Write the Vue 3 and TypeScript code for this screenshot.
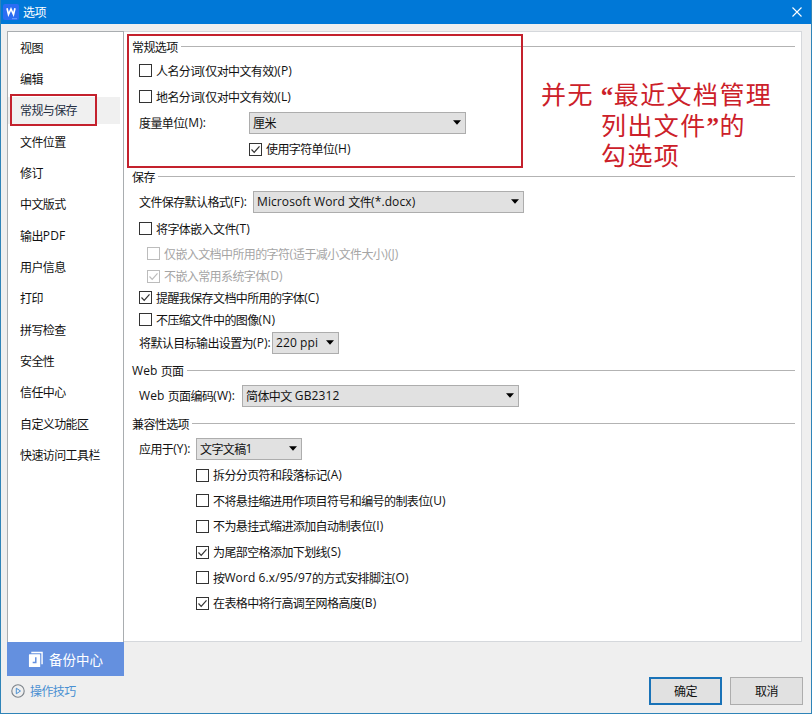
<script setup lang="ts">
import { h, ref, type FunctionalComponent } from 'vue'

interface Option {
  label: string
  checked: boolean
  disabled?: boolean
}

const tabs: string[] = [
  '视图', '编辑', '常规与保存', '文件位置', '修订', '中文版式', '输出PDF',
  '用户信息', '打印', '拼写检查', '安全性', '信任中心', '自定义功能区', '快速访问工具栏',
]
const activeTab = ref('常规与保存')

const generalOptions = ref<Option[]>([
  { label: '人名分词(仅对中文有效)(P)', checked: false },
  { label: '地名分词(仅对中文有效)(L)', checked: false },
])
const charUnit = ref<Option>({ label: '使用字符单位(H)', checked: true })
const saveOptions = ref<Option[]>([
  { label: '将字体嵌入文件(T)', checked: false },
  { label: '仅嵌入文档中所用的字符(适于减小文件大小)(J)', checked: false, disabled: true },
  { label: '不嵌入常用系统字体(D)', checked: true, disabled: true },
  { label: '提醒我保存文档中所用的字体(C)', checked: true },
  { label: '不压缩文件中的图像(N)', checked: false },
])
const compatOptions = ref<Option[]>([
  { label: '拆分分页符和段落标记(A)', checked: false },
  { label: '不将悬挂缩进用作项目符号和编号的制表位(U)', checked: false },
  { label: '不为悬挂式缩进添加自动制表位(I)', checked: false },
  { label: '为尾部空格添加下划线(S)', checked: true },
  { label: '按Word 6.x/95/97的方式安排脚注(O)', checked: false },
  { label: '在表格中将行高调至网格高度(B)', checked: true },
])

// Splits a label into Chinese and Latin runs so each gets its own spacing.
const Txt: FunctionalComponent<{ t: string }> = (props) =>
  h('span', { class: 'txt' }, (props.t.match(/[\u4e00-\u9fff]+|[^\u4e00-\u9fff]+/g) ?? []).map((run) =>
    h('span', { class: /[\u4e00-\u9fff]/.test(run) ? 'han' : 'latin' }, run)))
Txt.props = ['t']

const Check: FunctionalComponent<{ o: Option }> = (props) =>
  h('div', {
    class: ['check', { disabled: props.o.disabled }],
    onClick: () => { if (!props.o.disabled) props.o.checked = !props.o.checked },
  }, [
    h('svg', { class: 'box', viewBox: '0 0 13 13' }, [
      h('rect', { x: 0.5, y: 0.5, width: 12, height: 12 }),
      props.o.checked ? h('path', { d: 'M2.5 6.5l2.7 2.8 5.3-6' }) : null,
    ]),
    h(Txt, { t: props.o.label }),
  ])
Check.props = ['o']

const Combo: FunctionalComponent<{ value: string }> = (props) =>
  h('div', { class: 'combo' }, [
    h(Txt, { t: props.value }),
    h('svg', { class: 'arrow', viewBox: '0 0 8 5' }, [h('path', { d: 'M0 .3h8L4 4.7z' })]),
  ])
Combo.props = ['value']
</script>

<template>
  <div class="dialog">
    <header class="titlebar">
      <svg class="logo" viewBox="0 0 16 16">
        <rect width="16" height="16" rx="2" fill="#2b6df3" />
        <path d="M9 14.7h5" stroke="#6ba0ff" stroke-width="1" />
        <path d="M4 4.2l1.5 6.3L8 5l2.5 5.5L12 4.2" fill="none" stroke="#fff" stroke-width="1.7" />
      </svg>
      <Txt class="title" t="选项" />
      <svg class="close" viewBox="0 0 10 10"><path d="M.5.5l9 9M9.5.5l-9 9" /></svg>
    </header>

    <main class="main">
      <nav class="sidebar">
        <div class="tabs">
          <div v-for="tab in tabs" :key="tab" class="tab" :class="{ active: tab === activeTab }" @click="activeTab = tab">
            <div class="tab-in"><Txt :t="tab" /></div>
          </div>
        </div>
        <div class="backup">
          <svg class="backup-icon" viewBox="0 0 16 17">
            <path d="M3.5 1H15v12.5" fill="none" stroke="#fff" stroke-width="1.5" />
            <rect x="1" y="3" width="12" height="13.5" rx=".6" fill="#fff" />
            <path d="M8.3 6.2v5.4H5" fill="none" stroke="#6490df" stroke-width="1.6" />
          </svg>
          <span>备份中心</span>
        </div>
      </nav>

      <div class="content">
        <section class="general">
          <div class="legend"><Txt t="常规选项" /></div>
          <div v-for="o in generalOptions" :key="o.label" class="row"><Check :o="o" /></div>
          <div class="row"><Txt class="unit-label" t="度量单位(M):" /><Combo class="w-unit" value="厘米" /></div>
          <div class="row unit-check"><Check :o="charUnit" /></div>
        </section>

        <section class="save">
          <div class="legend"><Txt t="保存" /></div>
          <div class="row"><Txt class="format-label" t="文件保存默认格式(F):" /><Combo class="w-format" value="Microsoft Word 文件(*.docx)" /></div>
          <div v-for="o in saveOptions" :key="o.label" class="row" :class="{ nested: o.disabled }"><Check :o="o" /></div>
          <div class="row"><Txt class="ppi-label" t="将默认目标输出设置为(P):" /><Combo class="w-ppi" value="220 ppi" /></div>
        </section>

        <section class="web">
          <div class="legend"><Txt t="Web 页面" /></div>
          <div class="row"><Txt class="web-label" t="Web 页面编码(W):" /><Combo class="w-web" value="简体中文 GB2312" /></div>
        </section>

        <section class="compat">
          <div class="legend"><Txt t="兼容性选项" /></div>
          <div class="row"><Txt class="apply-label" t="应用于(Y):" /><Combo class="w-apply" value="文字文稿1" /></div>
          <div v-for="o in compatOptions" :key="o.label" class="row deep"><Check :o="o" /></div>
        </section>
      </div>
    </main>

    <footer class="footer">
      <div class="tips">
        <svg class="play" viewBox="0 0 14 14">
          <circle cx="7" cy="7" r="6.2" fill="none" stroke="#7b8289" stroke-width="1.1" />
          <path d="M5.3 4.2l4.2 2.8-4.2 2.8z" fill="none" stroke="#4a90d2" stroke-width="1" />
        </svg>
        <Txt t="操作技巧" />
      </div>
      <button class="btn primary"><Txt t="确定" /></button>
      <button class="btn"><Txt t="取消" /></button>
    </footer>

    <div class="mark mark-tab"></div>
    <div class="mark mark-group"></div>
    <div class="note">
      <div class="note-line note-first">并无<span class="quote open">“</span>最近文档管理</div>
      <div class="note-line">列出文件<span class="quote">”</span>的</div>
      <div class="note-line">勾选项</div>
    </div>
  </div>
</template>

<style>
body { margin: 0; }
.txt { display: inline-flex; align-items: center; white-space: pre; line-height: 16px; }
.txt .han { font-family: "Noto Sans CJK SC", sans-serif; font-size: 12px; letter-spacing: -0.6px; }
.txt .latin { font-family: "Open Sans", "Noto Sans CJK SC", sans-serif; font-size: 12px; letter-spacing: 0.1px; }
.check { display: flex; align-items: center; gap: 4px; margin-top: -1px; }
.check .box { width: 13px; height: 13px; flex: none; fill: #fff; stroke: #333; stroke-width: 1; }
.check .box path { fill: none; stroke-width: 1.2; }
.check.disabled { color: #a5a5a5; }
.check.disabled .box { stroke: #bcbcbc; }
.combo { display: flex; align-items: center; justify-content: space-between; box-sizing: border-box; height: 22px; padding: 0 4px 0 3px; border: 1px solid #adadad; background: #e1e1e1; flex: none; }
.combo .arrow { width: 8px; height: 5px; fill: #000; flex: none; margin-top: -1px; }
</style>

<style scoped>
.dialog { position: relative; box-sizing: border-box; width: 812px; height: 714px; display: flex; flex-direction: column; border: 1px solid #2f84b8; border-top: 0; background: #efefef; color: #111; font-family: "Open Sans", "Noto Sans CJK SC", sans-serif; font-size: 12px; overflow: hidden; }
.titlebar { height: 24px; flex: none; display: flex; align-items: center; padding: 0 9px 0 2px; background: #0078d7; color: #fff; }
.logo { width: 16px; height: 16px; }
.title { margin-left: 4px; }
.close { width: 10px; height: 10px; margin-left: auto; fill: none; stroke: #fff; stroke-width: 1.1; }
.main { display: flex; height: 611px; margin: 7px 9px 0 6px; flex: none; }
.sidebar { width: 118px; height: 645px; flex: none; display: flex; flex-direction: column; }
.tabs { box-sizing: border-box; height: 611px; border: 1px solid #a9adb0; border-bottom: 0; background: #fff; margin-right: 1px; }
.tab { height: 31.35px; display: flex; align-items: center; }
.tab-in { display: flex; align-items: center; width: 112px; height: 27px; padding-left: 12px; box-sizing: border-box; }
.active .tab-in { background: #f0f0f0; color: #263044; }
.backup { height: 34px; flex: none; margin-right: 1px; display: flex; align-items: center; padding-left: 21px; gap: 6px; box-sizing: border-box; background: #6490df; color: #fff; font-family: "Noto Sans CJK SC", sans-serif; font-size: 13.5px; }
.backup-icon { width: 15px; height: 17px; }
.content { flex: 1; box-sizing: border-box; height: 611px; border: 1px solid #d5d8dc; border-left: 0; background: #fff; margin-left: -1px; padding: 4px 6px 0 8px; }
section { display: grid; }
.general { grid-template-rows: 22px 26px 26px 26px 27px; margin-bottom: 3px; }
.save { grid-template-rows: 22px 28px 26px 24px 21px 22px 22px 23px; margin-bottom: 6px; }
.web { grid-template-rows: 22px 28px; margin-bottom: 3px; }
.compat { grid-template-rows: 22px 28px repeat(6, 25.6px); }
.legend { display: flex; align-items: center; gap: 3px; margin-top: -1px; }
.legend::after { content: ""; flex: 1; height: 1px; background: #b3b3b3; }
.row { display: flex; align-items: center; padding-left: 7px; }
.unit-check { padding-left: 117px; }
.nested { padding-left: 15px; }
.deep { padding-left: 64px; }
.unit-label { width: 110px; }
.format-label { width: 114px; }
.ppi-label { width: 133px; }
.web-label { width: 103px; }
.apply-label { width: 57px; }
.w-unit { width: 217px; }
.w-format { width: 271px; }
.w-ppi { width: 67px; }
.w-web { width: 277px; }
.w-apply { width: 106px; }
.footer { flex: 1; display: flex; align-items: flex-start; padding: 35px 8px 0 10px; gap: 8px; }
.tips { display: flex; align-items: center; gap: 5px; margin: 6px auto 0 0; color: #4a90d2; }
.play { width: 14px; height: 14px; }
.btn { box-sizing: border-box; width: 73px; height: 28px; padding: 0; display: flex; align-items: center; justify-content: center; border: 1px solid #adadad; background: #e1e1e1; color: #111; }
.btn.primary { border: 2px solid #1a73b8; }
.mark { position: absolute; box-sizing: border-box; border: 2px solid #c4212d; }
.mark-tab { left: 9px; top: 94px; width: 87px; height: 32px; }
.mark-group { left: 126px; top: 34px; width: 396px; height: 134px; }
.note { position: absolute; left: 540px; top: 81px; color: #cc2029; font-family: "Liberation Serif", "Noto Sans CJK SC", serif; font-size: 25px; letter-spacing: 1.4px; white-space: nowrap; }
.note-line { height: 30.5px; line-height: 30.5px; padding-left: 60px; }
.note-first { padding-left: 0; }
.quote { display: inline-block; width: 13px; letter-spacing: 0; font-weight: bold; }
.open { margin-left: 7px; }
</style>
